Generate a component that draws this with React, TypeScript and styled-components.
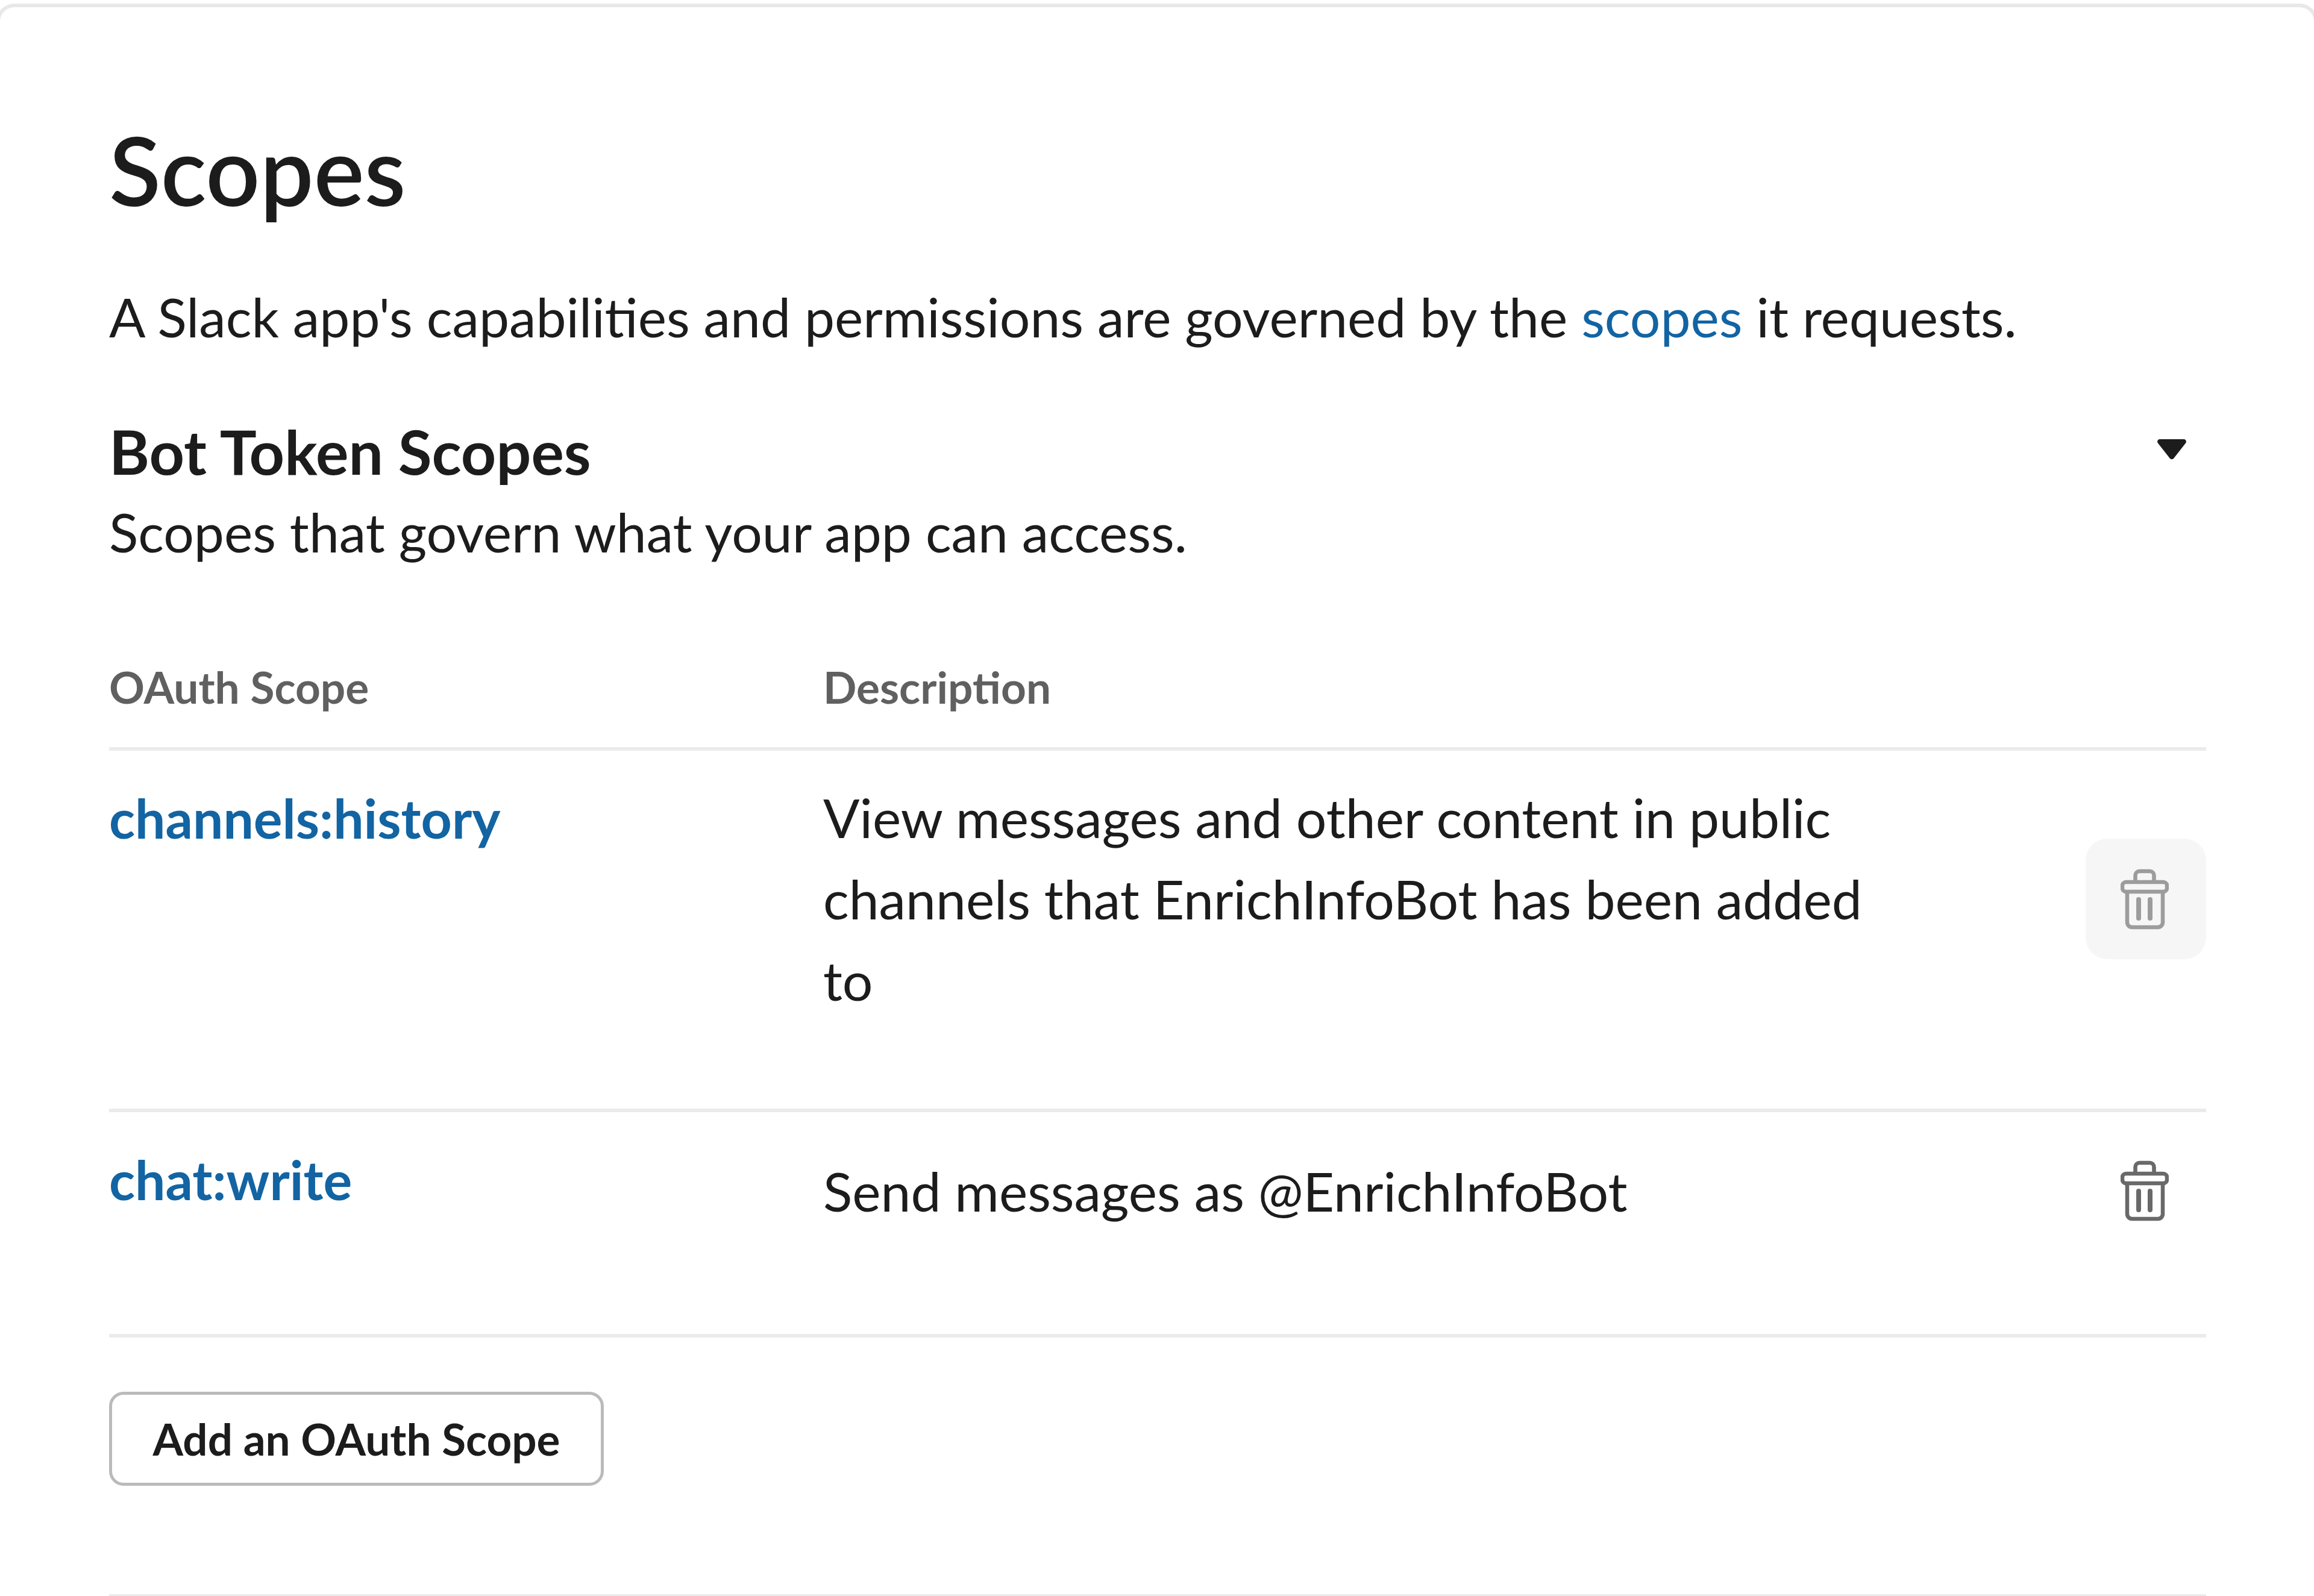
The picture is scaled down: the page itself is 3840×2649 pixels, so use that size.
import React from "react";
import styled, { createGlobalStyle } from "styled-components";

const GlobalStyle = createGlobalStyle`
  html, body {
    margin: 0;
    padding: 0;
    background: #fff;
    overflow: hidden;
  }
  body {
    font-family: Lato, "Noto Sans", sans-serif;
    color: #1d1c1d;
    font-variant-ligatures: common-ligatures;
  }
`;

const Card = styled.section`
  box-sizing: border-box;
  width: 3852px;
  height: 2700px;
  margin: 6px -6px 0;
  padding: 0 179px 0 181px;
  background: #fff;
  border: 6px solid #e8e8e8;
  border-radius: 30px;
`;

const Title = styled.h2`
  margin: 0;
  padding-top: 166px;
  font-size: 158px;
  line-height: 206px;
  font-weight: 600;
  color: #1d1c1d;
`;

const Intro = styled.p`
  margin: 0;
  padding-top: 74px;
  font-size: 89.45px;
  line-height: 135px;
`;

const TextLink = styled.a`
  color: #1264a3;
  text-decoration: none;
`;

const SectionHeader = styled.header`
  display: flex;
  justify-content: space-between;
  align-items: flex-start;
  margin-top: 89px;
`;

const SectionTitle = styled.h3`
  margin: 0;
  font-size: 102px;
  line-height: 133px;
  font-weight: 700;
`;

const SectionHint = styled.p`
  margin: 0;
  font-size: 89.45px;
  line-height: 135px;
`;

const Caret = styled.svg`
  display: block;
  width: 48px;
  height: 34px;
  margin: 47px 33px 0 0;
  fill: #1d1c1d;
`;

const TableHead = styled.div`
  display: grid;
  grid-template-columns: 1185px 1fr;
  margin-top: 141px;
  padding-bottom: 51px;
  border-bottom: 6px solid #ebebeb;
  font-size: 73px;
  line-height: 98px;
  font-weight: 700;
  color: #616061;
`;

const Row = styled.div<{ $bottom: number }>`
  display: grid;
  grid-template-columns: 1185px 1fr;
  padding-bottom: ${(p) => p.$bottom}px;
  border-bottom: 6px solid #ebebeb;
`;

const ScopeName = styled.a`
  padding-top: 44px;
  font-size: 89.45px;
  line-height: 135px;
  font-weight: 700;
  color: #1264a3;
  text-decoration: none;
`;

const RowBody = styled.div`
  display: flex;
  justify-content: space-between;
  align-items: center;
  padding-top: 30px;
`;

const Description = styled.div`
  width: 1770px;
  padding: 13px 0;
  font-size: 89.45px;
  line-height: 135px;
`;

const TrashButton = styled.button<{ $disabled?: boolean }>`
  display: flex;
  align-items: center;
  justify-content: center;
  width: 200px;
  height: 200px;
  padding: 0 4px 0 0;
  border: 0;
  border-radius: 36px;
  background: ${(p) => (p.$disabled ? "#f6f6f6" : "transparent")};
  color: ${(p) => (p.$disabled ? "#9c9c9c" : "#696969")};
`;

const AddButton = styled.button`
  display: block;
  box-sizing: border-box;
  width: 821px;
  height: 156px;
  margin: 90px 0 180px;
  padding: 0;
  border: 5px solid #bbbabb;
  border-radius: 24px;
  background: #fff;
  font-family: inherit;
  font-size: 72.8px;
  font-weight: 700;
  color: #1d1c1d;
`;

const Divider = styled.div`
  border-top: 6px solid #ebebeb;
`;

const TrashIcon = () => (
  <svg
    width="80"
    height="102"
    viewBox="0 0 80 102"
    fill="none"
    stroke="currentColor"
    strokeWidth="6.5"
  >
    <path d="M24.500 23V12a7 7 0 0 1 7-7h17a7 7 0 0 1 7 7v11" />
    <rect x="3" y="23" width="74" height="16" rx="6" />
    <path d="M11 39v51a8 8 0 0 0 8 8h43a8 8 0 0 0 8-8V39" />
    <path d="M30 52v31M49 52v31" strokeWidth="8" strokeLinecap="round" />
  </svg>
);

export default function App() {
  return (
    <>
      <GlobalStyle />
      <Card>
        <Title>Scopes</Title>
        <Intro>
          A Slack app's capabilities and permissions are governed by the{" "}
          <TextLink href="#">scopes</TextLink> it requests.
        </Intro>
        <SectionHeader>
          <div>
            <SectionTitle>Bot Token Scopes</SectionTitle>
            <SectionHint>Scopes that govern what your app can access.</SectionHint>
          </div>
          <Caret viewBox="0 0 48 34">
            <path d="M4 0h40a4 4 0 0 1 3 6.500L27 32a4 4 0 0 1-6 0L1 6.500A4 4 0 0 1 4 0z" />
          </Caret>
        </SectionHeader>
        <TableHead>
          <span>OAuth Scope</span>
          <span>Description</span>
        </TableHead>
        <Row $bottom={133}>
          <ScopeName href="#">channels:history</ScopeName>
          <RowBody>
            <Description>
              View messages and other content in public channels that
              EnrichInfoBot has been added to
            </Description>
            <TrashButton $disabled>
              <TrashIcon />
            </TrashButton>
          </RowBody>
        </Row>
        <Row $bottom={138}>
          <ScopeName href="#">chat:write</ScopeName>
          <RowBody>
            <Description>Send messages as @EnrichInfoBot</Description>
            <TrashButton>
              <TrashIcon />
            </TrashButton>
          </RowBody>
        </Row>
        <AddButton>Add an OAuth Scope</AddButton>
        <Divider />
      </Card>
    </>
  );
}
